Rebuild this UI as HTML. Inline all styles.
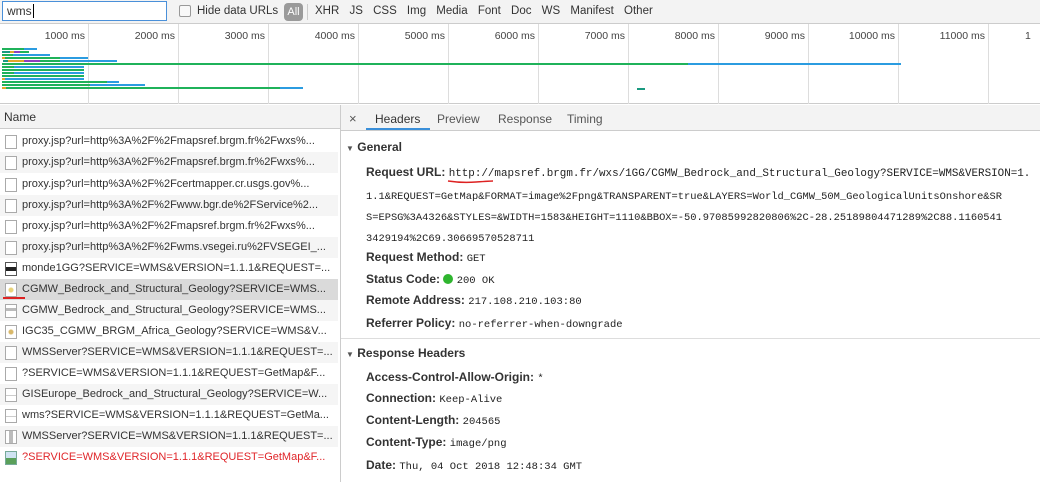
<!DOCTYPE html>
<html><head><meta charset="utf-8"><style>
*{margin:0;padding:0;box-sizing:border-box}
body{width:1040px;height:482px;overflow:hidden;background:#fff;font-family:"Liberation Sans",sans-serif;font-size:12px;color:#333;position:relative}
.a{position:absolute}
.tb{left:0;top:0;width:1040px;height:24px;background:#f3f3f3;border-bottom:1px solid #ccc}
.tl{top:24px;left:0;width:1040px;height:80px;background:#fff;border-bottom:1px solid #ccc}
.gl{top:24px;width:1px;height:80px;background:#ddd}
.ms{top:30px;font-size:10.5px;color:#444;text-align:right;width:80px}
.b{height:2px}
.g{background:#1fb25a}.bl{background:#2b9ce0}.y{background:#e1a62a}.p{background:#8d3fbd}.t{background:#1a9a80}
.row{left:0;width:338px;height:21px;line-height:21px;white-space:nowrap;overflow:hidden;padding-left:22px;font-size:11px;color:#333}
.ic{position:absolute;left:5px;top:4px;width:12px;height:14px;border:1px solid #aaa;background:#fff}
.ln{left:366px;white-space:nowrap;font-size:12px}
.mono{font-family:"Liberation Mono",monospace;font-size:10.5px;color:#222}
.ml{font-size:10.4px}
.k{font-weight:bold;color:#333}
</style></head><body>
<div class="a tb"></div>
<div class="a" style="left:2px;top:1px;width:165px;height:20px;border:1px solid #4a90d9;background:#fff;padding-left:4px;line-height:18px;font-size:12px">wms<span style="border-left:1px solid #000;margin-left:1px"></span></div>
<div class="a" style="left:179px;top:5px;width:12px;height:12px;border:1px solid #999;background:#f8f8f8;border-radius:2px"></div>
<div class="a" style="left:197px;top:5px;font-size:11.5px;color:#333">Hide data URLs</div>
<div class="a" style="left:284px;top:3px;width:19px;height:18px;background:#9a9a9a;border-radius:4px;color:#fff;font-size:11px;line-height:18px;text-align:center">All</div>
<div class="a" style="left:307px;top:4px;width:1px;height:16px;background:#ccc"></div>
<div class="a" style="left:315px;top:5px;font-size:11.5px;color:#333;word-spacing:7px;white-space:nowrap">XHR JS CSS Img Media Font Doc WS Manifest Other</div>
<div class="a tl"></div>
<div class="a gl" style="left:88px"></div><div class="a gl" style="left:178px"></div><div class="a gl" style="left:268px"></div><div class="a gl" style="left:358px"></div><div class="a gl" style="left:448px"></div><div class="a gl" style="left:538px"></div><div class="a gl" style="left:628px"></div><div class="a gl" style="left:718px"></div><div class="a gl" style="left:808px"></div><div class="a gl" style="left:898px"></div><div class="a gl" style="left:988px"></div>
<div class="a ms" style="left:5px">1000 ms</div><div class="a ms" style="left:95px">2000 ms</div><div class="a ms" style="left:185px">3000 ms</div><div class="a ms" style="left:275px">4000 ms</div><div class="a ms" style="left:365px">5000 ms</div><div class="a ms" style="left:455px">6000 ms</div><div class="a ms" style="left:545px">7000 ms</div><div class="a ms" style="left:635px">8000 ms</div><div class="a ms" style="left:725px">9000 ms</div><div class="a ms" style="left:815px">10000 ms</div><div class="a ms" style="left:905px">11000 ms</div><div class="a ms" style="left:995px;text-align:left;width:40px;padding-left:30px">1</div>
<div class="a b g" style="top:48px;left:2px;width:22px"></div><div class="a b bl" style="top:48px;left:24px;width:13px"></div>
<div class="a b t" style="top:51px;left:2px;width:8px"></div><div class="a b y" style="top:51px;left:10px;width:4px"></div><div class="a b p" style="top:51px;left:14px;width:6px"></div><div class="a b g" style="top:51px;left:20px;width:9px"></div>
<div class="a b g" style="top:54px;left:2px;width:11px"></div><div class="a b bl" style="top:54px;left:13px;width:37px"></div>
<div class="a b y" style="top:57px;left:2px;width:3px"></div><div class="a b g" style="top:57px;left:5px;width:55px"></div><div class="a b bl" style="top:57px;left:60px;width:28px"></div>
<div class="a b t" style="top:60px;left:3px;width:5px"></div><div class="a b y" style="top:60px;left:8px;width:16px"></div><div class="a b p" style="top:60px;left:24px;width:16px"></div><div class="a b g" style="top:60px;left:40px;width:20px"></div><div class="a b bl" style="top:60px;left:60px;width:57px"></div>
<div class="a b g" style="top:63px;left:2px;width:686px"></div><div class="a b bl" style="top:63px;left:688px;width:213px"></div>
<div class="a b g" style="top:66px;left:2px;width:12px"></div><div class="a b bl" style="top:66px;left:14px;width:70px"></div>
<div class="a b g" style="top:69px;left:2px;width:82px"></div>
<div class="a b g" style="top:72px;left:2px;width:12px"></div><div class="a b bl" style="top:72px;left:14px;width:70px"></div>
<div class="a b g" style="top:75px;left:2px;width:82px"></div>
<div class="a b y" style="top:78px;left:2px;width:3px"></div><div class="a b bl" style="top:78px;left:5px;width:79px"></div>
<div class="a b g" style="top:81px;left:2px;width:105px"></div><div class="a b bl" style="top:81px;left:107px;width:12px"></div>
<div class="a b g" style="top:84px;left:2px;width:88px"></div><div class="a b bl" style="top:84px;left:90px;width:55px"></div>
<div class="a b y" style="top:87px;left:2px;width:4px"></div><div class="a b g" style="top:87px;left:6px;width:274px"></div><div class="a b bl" style="top:87px;left:280px;width:23px"></div>
<div class="a b t" style="top:88px;left:637px;width:8px"></div>
<div class="a" style="left:0;top:105px;width:340px;height:24px;background:#f3f3f3;border-bottom:1px solid #ccc;padding-left:4px;line-height:24px;font-size:12px">Name</div>
<div class="a" style="left:340px;top:105px;width:1px;height:377px;background:#ccc"></div>
<div class="a row" style="top:131px;background:#fff"><i class="ic"></i>proxy.jsp?url=http%3A%2F%2Fmapsref.brgm.fr%2Fwxs%...</div>
<div class="a row" style="top:152px;background:#f5f5f5"><i class="ic"></i>proxy.jsp?url=http%3A%2F%2Fmapsref.brgm.fr%2Fwxs%...</div>
<div class="a row" style="top:174px;background:#fff"><i class="ic"></i>proxy.jsp?url=http%3A%2F%2Fcertmapper.cr.usgs.gov%...</div>
<div class="a row" style="top:195px;background:#f5f5f5"><i class="ic"></i>proxy.jsp?url=http%3A%2F%2Fwww.bgr.de%2FService%2...</div>
<div class="a row" style="top:216px;background:#fff"><i class="ic"></i>proxy.jsp?url=http%3A%2F%2Fmapsref.brgm.fr%2Fwxs%...</div>
<div class="a row" style="top:237px;background:#f5f5f5"><i class="ic"></i>proxy.jsp?url=http%3A%2F%2Fwms.vsegei.ru%2FVSEGEI_...</div>
<div class="a row" style="top:258px;background:#fff"><i class="ic" style="border-color:#555;background:linear-gradient(#fff 4px,#222 4px,#222 8px,#fff 8px)"></i>monde1GG?SERVICE=WMS&amp;VERSION=1.1.1&amp;REQUEST=...</div>
<div class="a row" style="top:279px;background:#dadada"><i class="ic" style="background:radial-gradient(circle at 50% 50%,#e8d27a 2px,#fff 3px)"></i>CGMW_Bedrock_and_Structural_Geology?SERVICE=WMS...</div>
<div class="a" style="left:3px;top:297px;width:22px;height:2px;background:#d22"></div>
<div class="a row" style="top:300px;background:#f5f5f5"><i class="ic" style="background:linear-gradient(#fff 3px,#bbb 3px,#bbb 6px,#fff 6px)"></i>CGMW_Bedrock_and_Structural_Geology?SERVICE=WMS...</div>
<div class="a row" style="top:321px;background:#fff"><i class="ic" style="background:radial-gradient(circle,#d9b86a 2px,#fff 3px)"></i>IGC35_CGMW_BRGM_Africa_Geology?SERVICE=WMS&amp;V...</div>
<div class="a row" style="top:342px;background:#f5f5f5"><i class="ic"></i>WMSServer?SERVICE=WMS&amp;VERSION=1.1.1&amp;REQUEST=...</div>
<div class="a row" style="top:363px;background:#fff"><i class="ic"></i>?SERVICE=WMS&amp;VERSION=1.1.1&amp;REQUEST=GetMap&amp;F...</div>
<div class="a row" style="top:384px;background:#f5f5f5"><i class="ic" style="background:linear-gradient(#fff 6px,#ccc 6px,#ccc 7px,#fff 7px)"></i>GISEurope_Bedrock_and_Structural_Geology?SERVICE=W...</div>
<div class="a row" style="top:405px;background:#fff"><i class="ic" style="background:linear-gradient(#fff 6px,#ccc 6px,#ccc 7px,#fff 7px)"></i>wms?SERVICE=WMS&amp;VERSION=1.1.1&amp;REQUEST=GetMa...</div>
<div class="a row" style="top:426px;background:#f5f5f5"><i class="ic" style="background:linear-gradient(90deg,#fff 3px,#bbb 3px,#bbb 7px,#fff 7px)"></i>WMSServer?SERVICE=WMS&amp;VERSION=1.1.1&amp;REQUEST=...</div>
<div class="a row" style="top:447px;background:#fff;color:#e0262a"><i class="ic" style="border-color:#7a9;background:linear-gradient(#cfe3f2 50%,#5aa05a 50%)"></i>?SERVICE=WMS&amp;VERSION=1.1.1&amp;REQUEST=GetMap&amp;F...</div>
<div class="a" style="left:341px;top:105px;width:699px;height:26px;background:#f3f3f3;border-bottom:1px solid #ccc"></div>
<div class="a" style="left:349px;top:111px;font-size:13px;color:#555">×</div>
<div class="a" style="left:366px;top:128px;width:64px;height:2px;background:#3a8fd9"></div>
<div class="a" style="left:375px;top:112px;font-size:12px;color:#333">Headers</div>
<div class="a" style="left:437px;top:112px;font-size:12px;color:#555">Preview</div>
<div class="a" style="left:498px;top:112px;font-size:12px;color:#555">Response</div>
<div class="a" style="left:567px;top:112px;font-size:12px;color:#555">Timing</div>
<div class="a" style="left:346px;top:140px;font-size:12px;font-weight:bold;color:#333"><span style="font-size:8px;color:#555">▼</span> General</div>
<div class="a ln" style="top:165px"><span class="k">Request URL:</span> <span class="mono" style="font-size:10.9px">http://mapsref.brgm.fr/wxs/1GG/CGMW_Bedrock_and_Structural_Geology?SERVICE=WMS&amp;VERSION=1.</span></div>
<svg class="a" style="left:446px;top:178px" width="50" height="8"><path d="M2 3 Q15 5 30 4 T47 3" stroke="#d22" stroke-width="1.5" fill="none"/></svg>
<div class="a ln" style="top:188px"><span class="mono ml">1.1&amp;REQUEST=GetMap&amp;FORMAT=image%2Fpng&amp;TRANSPARENT=true&amp;LAYERS=World_CGMW_50M_GeologicalUnitsOnshore&amp;SR</span></div>
<div class="a ln" style="top:209px"><span class="mono ml">S=EPSG%3A4326&amp;STYLES=&amp;WIDTH=1583&amp;HEIGHT=1110&amp;BBOX=-50.97085992820806%2C-28.25189804471289%2C88.1160541</span></div>
<div class="a ln" style="top:230px"><span class="mono ml">3429194%2C69.30669570528711</span></div>
<div class="a ln" style="top:250px"><span class="k">Request Method:</span> <span class="mono">GET</span></div>
<div class="a ln" style="top:272px"><span class="k">Status Code:</span> <span style="display:inline-block;width:10px;height:10px;border-radius:50%;background:#2fb52f;vertical-align:-1px"></span> <span class="mono">200 OK</span></div>
<div class="a ln" style="top:293px"><span class="k">Remote Address:</span> <span class="mono">217.108.210.103:80</span></div>
<div class="a ln" style="top:316px"><span class="k">Referrer Policy:</span> <span class="mono">no-referrer-when-downgrade</span></div>
<div class="a" style="left:341px;top:338px;width:699px;height:1px;background:#ddd"></div>
<div class="a" style="left:346px;top:346px;font-size:12px;font-weight:bold;color:#333"><span style="font-size:8px;color:#555">▼</span> Response Headers</div>
<div class="a ln" style="top:370px"><span class="k">Access-Control-Allow-Origin:</span> <span class="mono">*</span></div>
<div class="a ln" style="top:391px"><span class="k">Connection:</span> <span class="mono">Keep-Alive</span></div>
<div class="a ln" style="top:413px"><span class="k">Content-Length:</span> <span class="mono">204565</span></div>
<div class="a ln" style="top:435px"><span class="k">Content-Type:</span> <span class="mono">image/png</span></div>
<div class="a ln" style="top:458px"><span class="k">Date:</span> <span class="mono">Thu, 04 Oct 2018 12:48:34 GMT</span></div>
</body></html>
